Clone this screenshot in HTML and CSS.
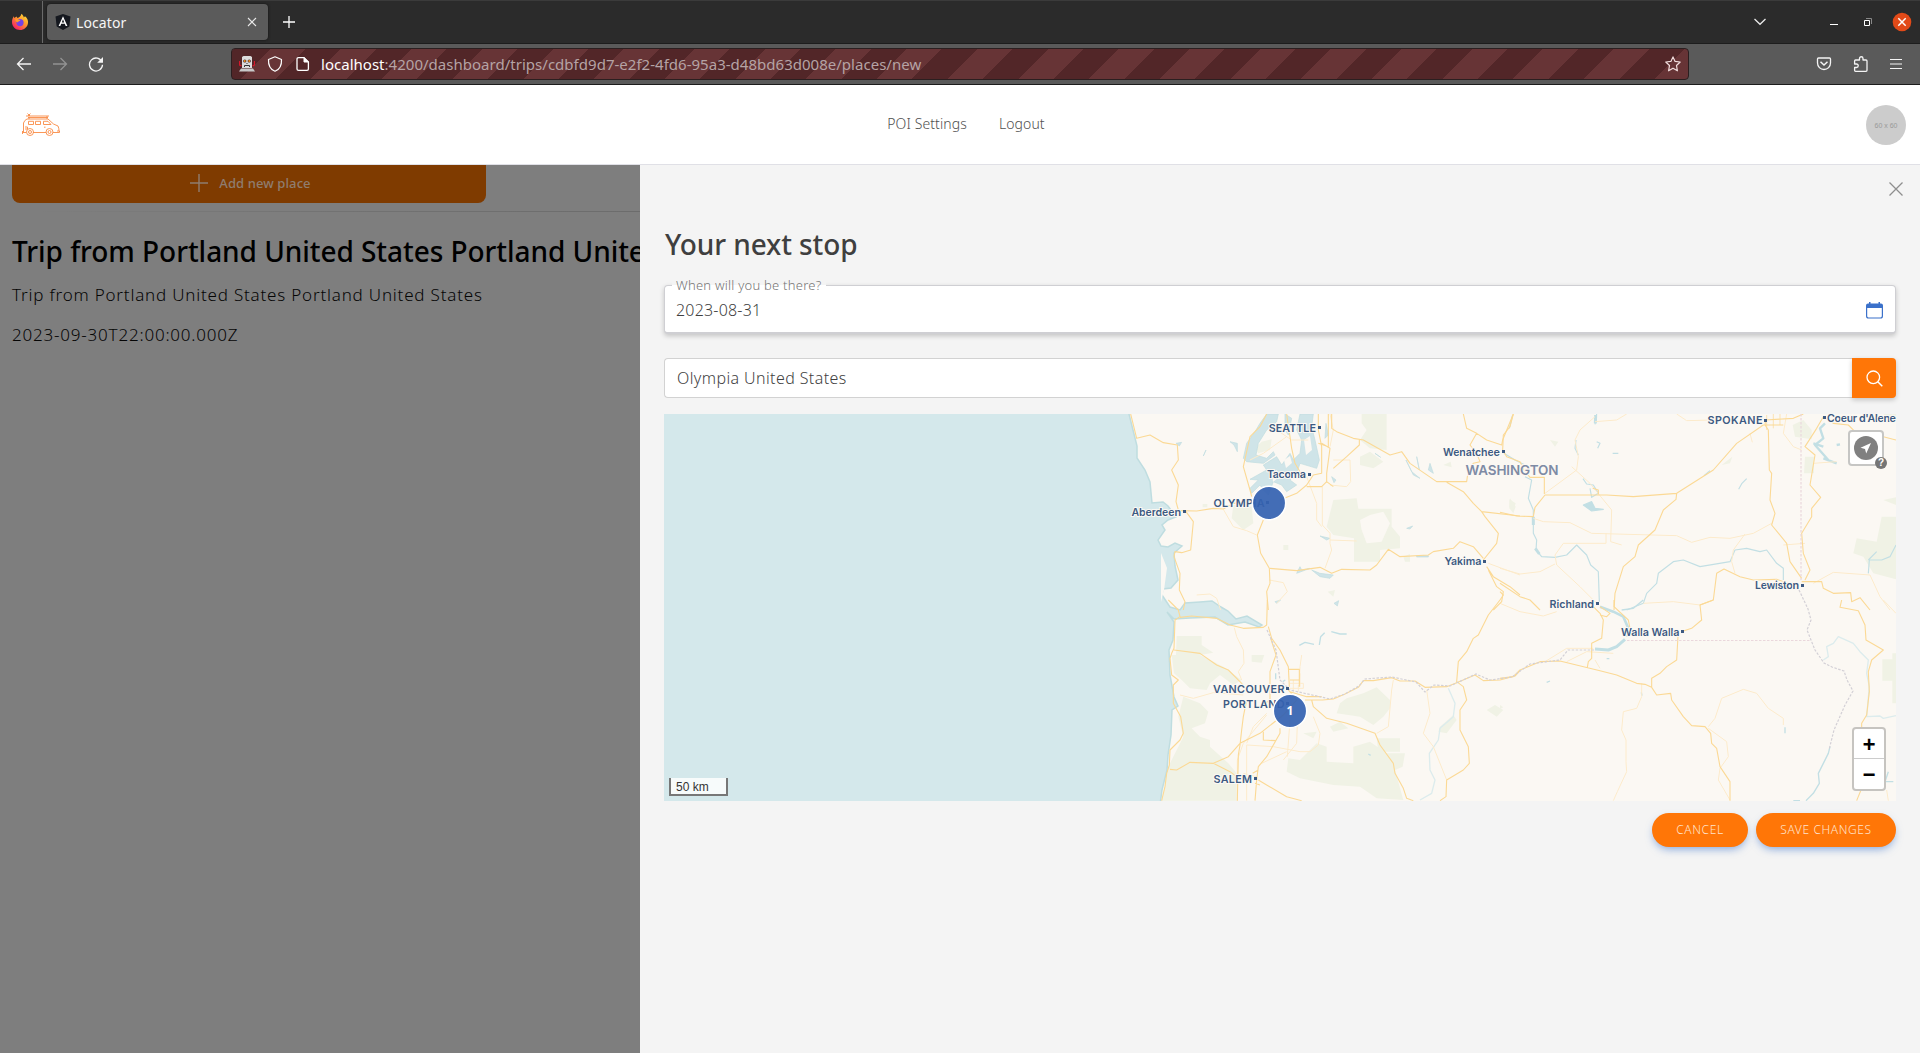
FILE: index.html
```html
<!DOCTYPE html>
<html lang="en">
<head>
<meta charset="utf-8">
<title>Locator</title>
<link rel="stylesheet" href="styles.css">
</head>
<body>
<div class="browser">
  <div class="tabs">
    <div class="pin">
      <svg width="18" height="18" viewBox="0 0 18 18"><defs><linearGradient id="fx" x1="1" y1="0" x2="0.2" y2="1"><stop offset="0" stop-color="#fff044"/><stop offset=".45" stop-color="#ff9a2a"/><stop offset="1" stop-color="#f5156c"/></linearGradient></defs><path d="M10.5 0.8C12 2.2 12.6 3.3 12.8 4.4L14 3.2C16.500 5.200 17.300 7.500 17 10C16.500 14.300 13 17 9 17C4.500 17 1 13.600 1 9C1 6.500 1.800 4.600 2.800 3.200L3.300 5L5.500 3.600L6.500 5C8 4.800 9.800 3.500 10.500 0.800Z" fill="url(#fx)"/><circle cx="9" cy="9.600" r="3.600" fill="#7542e5"/><path d="M4 6.500C6 5.500 7.500 6.300 9.500 7.500C8.200 8.500 7 8.300 6.500 9.500C5.500 9 4.500 8 4 6.500Z" fill="#ff9e26"/></svg>
    </div>
    <div class="tab">
      <svg width="16" height="16" viewBox="0 0 16 16"><path d="M8 0L15.500 2.600L14.300 12.600L8 16L1.700 12.600L0.500 2.600Z" fill="#15181f"/><path d="M8 2.200L3.600 12H5.300L6.200 9.800H9.800L10.700 12H12.400ZM8 5.300L9.200 8.400H6.800Z" fill="#fff"/></svg>
      <span class="tab-title">Locator</span>
      <svg class="tab-x" width="10" height="10" viewBox="0 0 10 10"><path d="M1 1L9 9M9 1L1 9" stroke="#e8e8e8" stroke-width="1.100"/></svg>
    </div>
    <svg class="new-tab" width="12" height="12" viewBox="0 0 12 12"><path d="M6 0V12M0 6H12" stroke="#fff" stroke-width="1.300"/></svg>
    <div class="win">
      <svg width="12" height="8" viewBox="0 0 12 8"><path d="M0.500 1L6 6.300L11.500 1" fill="none" stroke="#e8e8e8" stroke-width="1.300"/></svg>
      <svg class="min" width="8" height="8" viewBox="0 0 8 8"><path d="M0 6.500H8" stroke="#fff"/></svg>
      <svg class="max" width="8" height="8" viewBox="0 0 8 8"><path d="M.5 2.500H5.500V7.500H.5Z" fill="none" stroke="#fff"/><path d="M2 .5H7.500V6" fill="none" stroke="#888"/></svg>
      <svg class="quit" width="20" height="20" viewBox="0 0 20 20"><circle cx="10" cy="10" r="9.300" fill="#e24a18"/><path d="M6.300 6.300L13.700 13.700M13.700 6.300L6.300 13.700" stroke="#fff" stroke-width="1.500"/></svg>
    </div>
  </div>
  <div class="toolbar">
    <div class="nav-buttons">
      <svg width="16" height="16" viewBox="0 0 16 16"><path d="M15 8H1.500M7.500 2L1.500 8L7.500 14" fill="none" stroke="#f4f4f4" stroke-width="1.300"/></svg>
      <svg width="16" height="16" viewBox="0 0 16 16"><path d="M1 8H14.500M8.500 2L14.500 8L8.500 14" fill="none" stroke="#929292" stroke-width="1.300"/></svg>
      <svg width="16" height="16" viewBox="0 0 16 16"><path d="M14 6A6.500 6.500 0 1 0 14.500 8.800" fill="none" stroke="#f4f4f4" stroke-width="1.300"/><path d="M15 1V6.800H9.200Z" fill="#f4f4f4"/></svg>
    </div>
    <div class="url">
      <svg width="16" height="16" viewBox="0 0 16 16"><path d="M0.500 5V9L2.500 10M15.500 5V9L13.500 10" fill="none" stroke="#d8182c" stroke-width="1.300"/><path d="M3 1L4.500 0H11.500L13 1V12H3Z" fill="#dcdcdc"/><path d="M0 15.500L2 12.500H14L16 15.500Z" fill="#c9c9c9"/><circle cx="5.800" cy="5" r="1.600" fill="#3a2020"/><circle cx="10.200" cy="5" r="1.600" fill="#3a2020"/><circle cx="5.800" cy="5" r=".9" fill="#ff9820"/><circle cx="10.200" cy="5" r=".9" fill="#ff9820"/><path d="M5.500 11V9.500H10.500V11M8 7V8" fill="none" stroke="#333"/></svg>
      <svg width="16" height="16" viewBox="0 0 16 16"><path d="M8 .8L14.500 3.500C14.800 9 12.500 13.500 8 15.300C3.500 13.500 1.200 9 1.500 3.500Z" fill="none" stroke="#fff" stroke-width="1.200" stroke-linejoin="round"/></svg>
      <svg class="doc" width="16" height="16" viewBox="0 0 16 16"><path d="M9 1.600H3.500Q2 1.600 2 3V13Q2 14.400 3.500 14.400H12Q13.400 14.400 13.400 13V6Z" fill="none" stroke="#fff" stroke-width="1.300"/><path d="M9 1.600V6H13.400Z" fill="#fff" stroke="#fff"/></svg>
      <span class="address"><span class="host">localhost</span>:4200/dashboard/trips/cdbfd9d7-e2f2-4fd6-95a3-d48bd63d008e/places/new</span>
      <svg class="star" width="16" height="16" viewBox="0 0 16 16"><path d="M8 .9L10.100 5.400L15.200 6L11.500 9.500L12.400 14.800L8 12.200L3.600 14.800L4.500 9.500L.8 6L5.900 5.400Z" fill="none" stroke="#f2dede" stroke-width="1.200" stroke-linejoin="round"/></svg>
    </div>
    <div class="tools">
      <svg width="16" height="16" viewBox="0 0 16 16"><path d="M2.500 2H13.500Q14.500 2 14.500 3V7A6.500 6.500 0 0 1 1.500 7V3Q1.500 2 2.500 2Z" fill="none" stroke="#f4f4f4" stroke-width="1.300"/><path d="M4.500 5.800L8 9L11.500 5.800" fill="none" stroke="#f4f4f4" stroke-width="1.500"/></svg>
      <svg width="16" height="16" viewBox="0 0 16 16"><path d="M6.500 4V2.500A1.700 1.700 0 0 1 10 2.500V4H13Q14 4 14 5V14.300Q14 15.300 13 15.300H2.500Q1.600 15.300 1.600 14.300V11.500H3.500A1.500 1.500 0 0 0 3.500 8H1.600V5Q1.600 4 2.500 4Z" fill="none" stroke="#f4f4f4" stroke-width="1.300" stroke-linejoin="round"/></svg>
      <svg width="12" height="16" viewBox="0 0 12 16"><path d="M0 3.500H12M0 8H12M0 12.500H12" stroke="#f4f4f4" stroke-width="1.200"/></svg>
    </div>
  </div>
</div>

<header class="site">
  <svg class="logo" width="40" height="26" viewBox="0 0 40 26"><g fill="none" stroke="#f98b45" stroke-width=".9"><path d="M3.500 20V11Q4.500 8 7 7H28L33.500 12L38 14Q39 16 39 19M2.500 20.500H6M13 20.500H26M33 20.500H39.500V19H37M2.500 22V19"/><path d="M6 4H29M8 5.500H28M7.500 1.500L10 4M10.500 1.500L8 4M27 4V7M9 5V7"/><path d="M8.500 9.300H13.500V12.500H8.500ZM15.500 9.300H20.500V12.500H15.500ZM23.500 9.300H28L31 12.500H23.500ZM5 15H7.500V17H5M24 15.200H25.500"/><circle cx="10" cy="20" r="3.500"/><circle cx="10" cy="20" r="1.500"/><circle cx="29.500" cy="20" r="3.500"/><circle cx="29.500" cy="20" r="1.500"/></g></svg>
  <nav class="menu"><a class="poi">POI Settings</a><a class="logout">Logout</a></nav>
  <div class="avatar">60 x 60</div>
</header>

<main class="content">
  <section class="trip">
    <div class="add"><svg width="18" height="18" viewBox="0 0 18 18"><path d="M9 0V18M0 9H18" stroke="#8f7d6f" stroke-width="1.400"/></svg><span>Add new place</span></div>
    <div class="rule"></div>
    <h2 class="trip-title">Trip from Portland United States Portland United States</h2>
    <p class="trip-text">Trip from Portland United States Portland United States</p>
    <p class="trip-date">2023-09-30T22:00:00.000Z</p>
  </section>
  <section class="panel">
    <div class="close"><svg width="14" height="14" viewBox="0 0 14 14"><path d="M.5 .5L13.500 13.500M13.500 .5L.5 13.500" stroke="#8e8e8e" stroke-width="1.300"/></svg></div>
    <h2 class="title">Your next stop</h2>
    <div class="date">
      <label class="date-label">When will you be there?</label>
      <span class="date-value">2023-08-31</span>
      <svg width="17" height="17" viewBox="0 0 17 17"><path d="M.6 4V14Q.6 16 2.500 16H14.500Q16.400 16 16.400 14V4" fill="none" stroke="#3b71ca" stroke-width="1.200"/><path d="M0 6V3.500Q0 1.500 2 1.500H3V0H4.500V1.500H12.500V0H14V1.500H15Q17 1.500 17 3.500V6Z" fill="#3b71ca"/></svg>
    </div>
    <div class="search">
      <span class="query">Olympia United States</span>
      <span class="go"><svg width="17" height="17" viewBox="0 0 17 17"><circle cx="7.300" cy="7.300" r="6.300" fill="none" stroke="#fff" stroke-width="1.300"/><path d="M11.800 11.800L16.300 16.300" stroke="#fff" stroke-width="1.500"/></svg></span>
    </div>
    <div class="map">
      <svg class="tiles" width="1232" height="387" viewBox="664 414 1232 387">
        <rect x="664" y="414" width="1232" height="387" fill="#fbf8f3"/>
        <g fill="#f0f2e5">
          <g transform="translate(1100 410) scale(.33333)">
            <path d="M785 12H860V120L810 115L780 90L800 60L785 40ZM780 140L810 125L850 155L820 175L780 165ZM700 270L770 265L775 296H875V350L900 380V415L840 420V455H762V385L700 375L680 350L690 310Z"/>
            <path d="M780 330L810 315L850 305L870 340L845 395L800 400L785 360Z" fill="#fbf8f3"/>
            <path d="M400 285L455 290L460 340L430 360L395 325ZM485 95L515 88L510 120L475 130L465 115ZM550 405H565V420H550ZM1230 265L1247 290L1240 310L1228 295ZM1030 165L1052 155L1055 172ZM308 282H322V292H308ZM910 440L930 432V455H915ZM683 545L705 540L700 560Z"/>
          </g>
          <g transform="translate(1500 410) scale(.33333)"><path d="M878 45L910 30L935 60V88L885 80ZM915 140H942V190H912ZM1145 320H1188V508L1120 490L1090 440L1060 430L1070 385L1130 395ZM1150 270L1188 262V285ZM1150 12H1188V30L1165 32ZM665 165L697 140L690 160ZM28 268L47 280L40 302L28 290ZM150 90L175 95L165 110Z"/></g>
          <g transform="translate(1100 600) scale(.33333)">
            <path d="M230 108H305V135L340 158L300 165H228ZM215 165H300L370 200L425 240L400 255L360 225L330 250L320 270L270 265L245 240L222 220ZM250 290L300 310L325 335L315 370L275 385L300 410L330 420V440L385 490L410 520V602H185L205 500L250 410L235 350ZM455 165H493L485 188L455 185ZM720 310L740 295L790 280L830 262L870 300V325L850 350L820 375L780 350L710 340ZM830 415H900V455H835ZM565 475L600 480L650 430L680 440V485L760 490V440L810 425L860 460H915L908 500L885 510L910 600L830 595L780 560L700 555L600 535L560 515ZM690 380L720 365L745 385L700 395ZM610 400L650 395L640 415ZM1160 330L1185 315L1210 330L1190 350ZM1020 380L1060 345L1070 360L1040 400L1015 395Z"/>
          </g>
          <g transform="translate(1500 600) scale(.33333)"><path d="M1147 178H1177V160H1188V310H1177V242H1147ZM0 315L10 322L0 327Z"/></g>
        </g>
        <path fill="#d4e8eb" stroke="#bfdde0" stroke-width="1.500" d="M660 410H1128L1133 430 1137 446V458L1145 470 1150 482 1152 503 1163 502 1168 506 1176 517 1168 520 1162 525 1165 530 1158 540 1161 546 1168 547 1175 543 1182 546 1174 553 1175 566 1178 580 1171 588 1163 589 1162 595 1170 607 1180 610 1185 603 1200 602 1212 601 1221 607 1228 611 1236 619 1247 616 1262 625 1259 627 1245 622 1228 625 1215 617 1190 618 1174 619 1167 612 1174 622 1173 640 1169 650 1170 675 1174 697 1178 706 1172 710 1171 735 1168 755 1167 770 1162 790 1160 805H660Z"/>
        <path fill="#fbf8f3" d="M1161 553L1167 568L1164 590L1161 602L1161 580Z"/>
        <g transform="translate(1100 410) scale(.33333)" fill="#cfe4e8" stroke="#bfdde0" stroke-width="2">
          <path d="M500 12L535 12L530 35L500 60L475 100L468 135L500 145L520 125L525 135L490 160L440 155L430 145L440 100L465 65L480 40Z"/>
          <path d="M600 12H640L635 50L645 90L658 150L650 175L600 160L590 190L570 210L590 225L560 245L545 225L520 215L505 255L490 240L480 225L455 250L450 235L475 210L450 208L500 180L490 165L530 140L545 165L570 130L580 150L600 130L605 90L590 60Z"/>
          <path d="M555 12L575 25L565 75L555 60ZM678 40L685 75L675 85ZM390 95L412 100V125L402 105ZM228 100L245 97L238 108ZM318 120L310 138ZM918 150L935 185L960 205L940 195ZM990 160L1000 190L985 180ZM950 140L958 180ZM825 130L842 142ZM635 480L660 490L700 495L690 505L660 500ZM920 355L938 348L930 357ZM525 575L542 570L530 580ZM702 580L716 572L712 588ZM590 490L600 470L605 480L630 475ZM660 378L690 385L680 390ZM695 200L708 210L702 218ZM950 437H985V441H950Z"/>
        </g>
        <path fill="#fbf8f3" d="M1284 460L1290 456L1292 463L1286 468ZM1272 473L1277 470L1278 478L1273 482ZM1304 440L1310 436L1312 450L1306 455Z"/>
        <g fill="none" stroke="#c2dfe4" stroke-width="1.300" stroke-linejoin="round">
          <g transform="translate(1500 410) scale(.33333)" stroke-width="3.500">
            <path d="M290 12L285 43M38 15L28 55M12 130L45 150L75 165M75 200L95 210L85 265L100 300V370L110 390L108 420L125 440L165 442L200 435L230 405L260 435L272 465L295 485L298 575M228 90L225 115L235 135M290 95L300 100L293 115M338 130H355M716 238L726 220L740 206M249 206L260 222L280 225L295 250L275 262L270 235M380 600L430 580L440 550L470 520L475 490L520 455L550 450L600 470L690 455L705 420L740 415L780 425L800 420L830 460L850 475V510M1188 405L1170 440L1145 450H1108L1105 490M1105 450L1130 425"/>
            <path d="M975 40L960 55L970 85L945 105L985 150M940 100L970 110M970 145L1010 160M1010 105L1020 103" stroke-width="7"/>
            <path d="M250 285L275 275L285 295L310 298L275 303Z M612 197L630 182" fill="#c2dfe4"/>
            <path d="M287 15L286 40M100 320V345M106 415L118 432" stroke-width="9"/>
          </g>
          <g transform="translate(1100 600) scale(.33333)" stroke-width="4">
            <path d="M598 136L615 127L642 133M658 135L662 110L674 98M694 95L720 102H740M527 220V238M548 245L556 240M805 462L812 466"/>
            <path d="M1045 265L1065 310L1060 350L1020 385L1015 420L988 460L990 510L1005 540L995 580L960 600" stroke="#dceced"/>
          </g>
          <g transform="translate(1500 600) scale(.33333)" stroke-width="4">
            <path d="M300 20L340 35L370 50L385 85L380 110" stroke-width="8"/><path d="M285 147L325 150L350 140L375 118" stroke-width="9"/>
            <path d="M365 30L400 25L430 0M320 176H328M140 247L150 243M424 277L426 287M855 382V400M1165 515L1155 545L1180 545M990 440L985 460L970 490L955 520L958 550L940 580L918 602M880 602H900"/>
            <path d="M970 180L985 170L980 140L1000 130L1015 110L1060 130L1080 155L1105 180L1100 220L1108 260L1100 350L1140 348L1150 355L1188 347" stroke="#dceced"/>
          </g>
        </g>
        <g fill="none" stroke="#fdebcb" stroke-width="3" stroke-linejoin="round">
          <g transform="translate(1100 410) scale(.33333)"><path d="M370 298L400 350L440 362L470 375M620 200L650 280V330L665 350M667 230V345L690 370L690 400L695 420L675 475M690 390L770 393M700 150H750L752 215L740 230L690 225M508 510L550 518L562 545L530 580M290 555L330 552L350 565L362 600M450 150L490 130L560 80M530 60L575 90H625M1165 460L1260 495M690 12L700 60L690 110"/></g>
          <g transform="translate(1500 410) scale(.33333)"><path d="M285 20L240 60L225 90L235 140L230 180L135 250M215 170L270 220L335 300L332 395L365 405M100 325L130 335L210 338L275 370L530 377L575 397L630 382L690 385L760 370L815 340M735 372L700 420L695 455L705 490M318 370V400H190L165 435L170 465L240 530L290 580M0 475L60 492L120 485L165 462M285 35L350 30L380 12M530 12L560 32L640 30M860 12L850 70L880 110L905 120M850 405L915 400M940 520L1000 487L1110 495L1140 560L1170 600M430 580L520 575L600 585M940 160L1010 155M750 70L757 97"/></g>
          <g transform="translate(1100 600) scale(.33333)"><path d="M403 83L410 110L430 150L432 190L415 215L425 240M605 165L600 200L598 250M240 285L280 295L340 278L430 285M412 602V480L430 430L500 345M440 602V435L520 440L600 455H630L655 435L660 400L640 350M570 360L562 470M592 370L590 430L550 480M485 490L560 455M500 340L460 380L440 430M880 240L875 270L865 380L830 400M980 270L990 340L970 400L1000 440L1040 540M600 260V220M570 265H610V250H570M580 240V275M595 255V275M430 520L470 530"/></g>
          <g transform="translate(1500 600) scale(.33333)"><path d="M425 250L425 290L410 325L370 335L365 390L378 420V485L380 515L352 575L340 602M625 380L645 355L665 295L730 268L770 280L805 325L850 355V375M625 385L680 425L685 470L660 505L655 540L690 600M135 185L200 145L280 145M285 180L300 205M200 185L260 155L340 160M0 10L60 35L130 48L170 35M1150 0L1188 40M1160 570L1165 602"/></g>
        </g>
        <g fill="none" stroke="#fbd995" stroke-width="3.300" stroke-linejoin="round">
          <g transform="translate(1100 410) scale(.33333)">
            <path d="M92 12L110 85L150 75L190 98L232 105L235 150L215 180L235 225L228 275L235 300M500 12L480 50L450 80L430 170L450 240L455 260M235 302L290 303L340 295L370 297L400 280L450 275M258 305L280 335L272 420L245 428L225 425L222 440L240 490L238 540L255 575L250 600M540 270L590 250L620 225L640 195L665 190V110L655 60V12M490 330L472 375L482 430L508 475L510 520L500 545L505 600M570 80L575 115L585 160L600 185M560 12L565 50L570 80M665 100L690 115L680 190V215L700 230M680 215L665 230H620M655 100L685 110L685 12M695 12V55L710 65L760 85L790 90L870 135L905 125L930 160L1010 215L1100 215L1105 180L1120 160L1140 155L1130 130L1110 105L1130 70L1100 55L1090 12M1130 70L1160 90L1205 105L1208 90L1240 12M700 175L740 140L778 105L778 90M510 475L590 482L660 472L695 490L725 478L810 480L830 465L865 418L900 440L985 435L1000 425L1060 415L1080 395L1120 410L1150 445M1150 450L1190 400L1195 370L1155 320L1145 305L1120 280L1090 245L1040 217M1145 305L1260 318M1160 470L1180 500L1230 530L1260 555M1165 480L1190 530L1210 545L1205 575L1180 600"/>
          </g>
          <g transform="translate(1500 410) scale(.33333)"><path d="M40 12L30 50L10 75L8 120L20 140L60 155L72 180L90 202H133V252M0 307L50 318L100 320L105 292L135 255L320 255L400 260L530 250L640 180L710 100L790 45M530 250L528 268L490 300L465 360L415 405L405 440L370 470L345 550L342 600M278 235L295 240V253M797 30L795 45L805 60L808 180L815 190L810 270L825 310L815 345L860 400L870 455L905 505M795 30L880 25L910 12M785 45H850M915 510L930 480L910 430L905 370L935 320V295L962 262L930 225L945 135L915 110L950 55L970 20M970 20L1000 40L1045 45L1065 65M1150 80L1188 90M905 515L965 515L970 535L1000 550L1052 548L1055 575L1080 563L1110 600M0 520L60 560L90 570L120 600M600 585L640 570L650 490L672 477L720 500L760 510L830 508L880 525M0 545L10 555L0 570"/><path stroke-width="2" d="M820 12V55M840 12V45M800 15V60"/></g>
          <g transform="translate(1100 600) scale(.33333)"><path d="M205 0L235 30L240 50L225 60L222 145L215 160L210 175L215 225L235 240L220 255L220 310L242 350L250 400L240 420L210 450L208 495L200 520L195 560L185 602M240 52L275 48L350 55L390 75L430 85L490 82L500 75L502 0M505 80L515 115L540 150L565 200L568 260M512 115L528 165L510 215V300L495 310M222 150L300 160L350 195L385 210L425 250L440 275M565 208H598V260M570 240H598M565 270L590 300L550 345L480 400L420 430L385 470L340 490L270 487L230 510L210 508M440 300L430 350L425 390L420 435L415 465L412 602M340 490L390 515L410 530M490 395V420L528 422M540 385V400L500 470L475 500L470 540L465 602M475 540L500 555L560 590L605 602M635 300L640 320L680 355L740 370L825 400L840 435L880 490L885 520L910 565L920 595L940 602M615 300H668L700 297L735 282L775 262L790 242L820 242L875 233L900 243L945 243L975 262L1040 260L1070 248L1125 225L1150 242L1200 240L1245 228L1260 212M570 275L620 290H665M1200 0L1165 45L1135 105L1120 115L1100 155L1075 185L1070 245L1090 260L1100 300L1080 330L1080 390L1105 440L1108 490L1090 510L1040 540L1038 590L1020 602M458 520L475 510M465 550L480 555"/></g>
          <g transform="translate(1500 600) scale(.33333)"><path d="M0 235L40 230L60 210L120 185L180 183L300 212L350 225L410 250L435 253L455 262L470 285L512 280L515 300L550 350L575 377L615 380L632 400L635 430L650 445L660 500L690 545V602M455 262V235L480 220L500 200L530 180L535 90M550 93L575 85L605 60L600 15L640 0M262 202L265 185L275 175V130L305 115L310 60L300 40L270 10M300 20L330 40L320 50L300 45M342 0V20L385 60L390 85M1025 0L1020 22L1075 32L1095 75L1098 120L1150 150L1115 180L1105 215L1108 275L1100 345L1085 370V400M1083 570L1070 602"/></g>
        </g>
        <g fill="none" stroke="#ead7dc" stroke-width="1.200" stroke-dasharray="2.500 1.500">
          <path d="M1801 414V580"/><path d="M1627 640.500H1811"/>
          <path stroke="#d3d0d6" d="M1799 590L1808 609L1811 620L1807 630L1815 650L1824 663L1832 667L1844 671L1847 680L1853 691L1845 705L1834 730L1829 750"/>
          <path stroke="#d3d0d6" d="M1267 630L1276 650L1280 680L1290 690L1330 699L1345 694L1359 686L1365 679L1392 677L1416 682L1425 692L1434 685L1450 686L1476 674L1490 680L1512 677L1530 664L1560 660L1568 650L1594 650"/>
        </g>
        <g class="dots" fill="#3d5a82"><path d="M1318 426h3v3h-3zM1308 473h3v3h-3zM1266 501h3v3h-3zM1183 510h3v3h-3zM1502 450h3v3h-3zM1483 560h3v3h-3zM1764 419h3v3h-3zM1823 416h3v3h-3zM1801 584h3v3h-3zM1596 602h3v3h-3zM1681 630h3v3h-3zM1286 687h3v3h-3zM1286 702h3v3h-3zM1254 777h3v3h-3z"/></g>
        <g class="places">
          <text x="1268.700" y="431.500" textLength="47.300">SEATTLE</text>
          <text x="1267" y="478" textLength="39">Tacoma</text>
          <text x="1213.500" y="506.500" textLength="51">OLYMPIA</text>
          <text x="1131.500" y="515.500" textLength="49.500">Aberdeen</text>
          <text x="1443" y="455.500" textLength="57">Wenatchee</text>
          <text class="state" x="1465.500" y="475" textLength="93">WASHINGTON</text>
          <text x="1444.500" y="565" textLength="37">Yakima</text>
          <text x="1707.500" y="424" textLength="55">SPOKANE</text>
          <text x="1827" y="422" textLength="69">Coeur d'Alene</text>
          <text x="1755" y="589" textLength="44">Lewiston</text>
          <text x="1549.500" y="607.500" textLength="44.500">Richland</text>
          <text x="1621" y="635.500" textLength="58.500">Walla Walla</text>
          <text x="1213" y="693" textLength="71.500">VANCOUVER</text>
          <text x="1223" y="707.500" textLength="61.500">PORTLAND</text>
          <text x="1213.500" y="782.500" textLength="38.500">SALEM</text>
        </g>
        <g fill="#3562b0" fill-opacity=".93" stroke="#fff" stroke-width="1.500"><circle cx="1269" cy="503" r="16.700"/><circle cx="1290" cy="711" r="16.700"/></g>
        <text class="count" x="1290" y="715" text-anchor="middle">1</text>
      </svg>
      <div class="locate"><svg width="24" height="24" viewBox="0 0 24 24"><circle cx="12" cy="12" r="12" fill="#808080"/><path d="M17 7L6.500 11.800L11 13L12.200 17.500Z" fill="#fff"/></svg></div>
      <div class="help">?</div>
      <div class="zoom"><div class="zoom-in">+</div><div class="zoom-out">−</div></div>
      <div class="scale">50 km</div>
    </div>
    <div class="actions"><div class="btn cancel">CANCEL</div><div class="btn save">SAVE CHANGES</div></div>
  </section>
</main>
</body>
</html>
```
FILE: styles.css
```css
* { box-sizing: border-box; }
body { margin: 0; width: 1920px; height: 1053px; overflow: hidden; display: flex; flex-direction: column; font-family: "Noto Sans", sans-serif; background: #f4f4f4; }
h2, p { margin: 0; white-space: nowrap; }
svg { display: block; flex: none; }
.tabs { height: 44px; background: #2b2b2b; border-top: 1px solid #3b3b3b; border-bottom: 1px solid #1d1d1d; display: flex; align-items: center; }
.pin { width: 43px; height: 42px; border-right: 1px solid #6a6a6a; display: flex; align-items: center; padding-left: 11px; }
.tab { width: 221px; height: 36px; margin-left: 4px; background: #5b5b5b; border-radius: 4px; display: flex; align-items: center; padding: 0 11px 0 8px; box-shadow: 0 0 3px #111; }
.tab-title { margin-left: 5px; font-size: 14px; letter-spacing: .1px; color: #f6f6f6; flex: 1; }
.new-tab { margin-left: 15px; }
.win { margin-left: auto; display: flex; align-items: center; padding-right: 8px; }
.min { margin-left: 64px; }
.max { margin-left: 26px; }
.quit { margin-left: 20px; }
.toolbar { height: 41px; background: #5a5a5a; border-bottom: 1px solid #1c1c1c; display: flex; align-items: center; }
.nav-buttons { display: flex; gap: 20px; padding-left: 16px; width: 231px; }
.url { width: 1458px; height: 32px; border: 1px solid #2b1f20; border-radius: 4px; display: flex; align-items: center; padding: 0 7px; background: repeating-linear-gradient(135deg, #673436 0 2px, #522628 2px 27px, #673436 27px 50px); }
.url svg + svg { margin-left: 12px; }
.address { margin-left: 10px; font-size: 15px; letter-spacing: .02px; color: #b5a3a5; flex: 1; white-space: nowrap; }
.host { color: #fff; }
.tools { margin-left: auto; display: flex; gap: 21px; padding-right: 18px; align-items: center; }
.site { height: 80px; background: #fff; border-bottom: 1px solid #e0e0e6; display: flex; align-items: center; justify-content: space-between; padding: 0 14px 0 20px; }
.menu { display: flex; gap: 32px; font-size: 14px; font-weight: 350; letter-spacing: .1px; color: #505050; line-height: 20px; padding: 0 0 2px 6px; }
.avatar { width: 40px; height: 40px; border-radius: 50%; background: #ccc; color: #999; font: 7px/41px "Liberation Sans", sans-serif; text-align: center; }
.content { flex: 1; display: flex; min-height: 0; }
.trip { width: 640px; background: #7e7e7e; overflow: hidden; padding-left: 12px; color: #050505; }
.add { width: 474px; height: 38px; background: #7f3b00; border-radius: 0 0 8px 8px; display: flex; align-items: center; justify-content: center; gap: 11px; font-size: 13px; font-weight: 500; letter-spacing: .1px; color: #8f7d6f; padding: 0 0 3px 3px; }
.rule { height: 1px; margin: 8px 0 22px 20px; background: linear-gradient(90deg, #7e7e7e, #727272 50%, #6c6c6c); }
.trip-title { font-size: 28px; line-height: 34px; font-weight: 500; letter-spacing: -.05px; color: #000; }
.trip-text { font-size: 17px; line-height: 26px; font-weight: 300; letter-spacing: .8px; margin-top: 14px; }
.trip-date { font-size: 17px; line-height: 26px; font-weight: 300; letter-spacing: .8px; margin-top: 14px; }
.panel { width: 1280px; background: #f4f4f4; padding: 0 24px; }
.close { height: 62px; display: flex; justify-content: flex-end; padding-top: 17px; margin-right: -7px; }
.title { font-size: 28px; line-height: 34px; font-weight: 500; letter-spacing: -.1px; padding-left: 1px; color: #3f3f3f; }
.date { height: 49px; margin-top: 24px; background: #fff; border: 1px solid #cfcfd3; border-bottom-width: 2px; border-radius: 4px; box-shadow: 0 2px 5px rgba(0,0,0,.2); display: flex; align-items: center; padding: 2px 12px 0 11px; position: relative; }
.date-label { position: absolute; left: 7px; top: -10px; height: 18px; padding: 0 5px 0 4px; font-size: 13px; line-height: 18px; font-weight: 300; letter-spacing: .24px; color: #757575; background: linear-gradient(#f4f4f4 50%, #fff 50%); white-space: nowrap; }
.date-value { flex: 1; font-size: 16px; line-height: 20px; font-weight: 300; letter-spacing: .2px; color: #3f3f3f; padding-bottom: 1px; }
.search { height: 40px; margin-top: 24px; display: flex; }
.query { flex: 1; background: #fff; border: 1px solid #d2d2d2; border-right: 0; border-radius: 4px 0 0 4px; padding-left: 12px; font-size: 16px; line-height: 38px; font-weight: 300; letter-spacing: .4px; color: #3f3f3f; }
.go { width: 44px; background: #ff7607; border-radius: 0 4px 4px 0; display: flex; align-items: center; justify-content: center; box-shadow: 0 2px 5px rgba(0,0,0,.2); }
.map { height: 387px; margin-top: 16px; position: relative; overflow: hidden; }
.places { font: 600 10.800px Inter, sans-serif; fill: #3d5a82; stroke: #fbf8f3; stroke-width: 2px; paint-order: stroke; }
.state { font-size: 13.500px; font-weight: 600; fill: #7e8ba5; }
.count { font: 700 12px "Noto Sans", sans-serif; fill: #fff; }
.locate { position: absolute; left: 1184px; top: 16px; width: 36px; height: 36px; border: 2px solid #c6c6c4; border-radius: 4px; background: #fff; padding: 4px; }
.help { position: absolute; left: 1211px; top: 43px; width: 12px; height: 12px; border-radius: 50%; background: #757575; color: #fff; font: 700 10px/12px "Liberation Sans", sans-serif; text-align: center; }
.zoom { position: absolute; left: 1188px; top: 313px; width: 34px; height: 64px; border: 2px solid #c6c4c0; border-radius: 4px; background: #fff; font: 700 22px/36px "Liberation Mono", monospace; text-align: center; color: #000; }
.zoom-in { height: 30px; border-bottom: 1px solid #ccc; }
.scale { position: absolute; left: 5px; top: 364px; width: 59px; height: 18px; border: 2px solid #777; border-top: 0; background: rgba(255,255,255,.8); font: 12px/18px "Liberation Sans", sans-serif; color: #333; padding-left: 5px; }
.actions { display: flex; justify-content: flex-end; gap: 8px; margin-top: 12px; }
.btn { height: 34px; border-radius: 17px; background: #ff7607; color: #ffe3cc; font-size: 12px; line-height: 34px; font-weight: 300; letter-spacing: .6px; text-align: center; box-shadow: 0 4px 8px -2px rgba(59,113,202,.6); }
.cancel { width: 96px; }
.save { width: 140px; }
```
